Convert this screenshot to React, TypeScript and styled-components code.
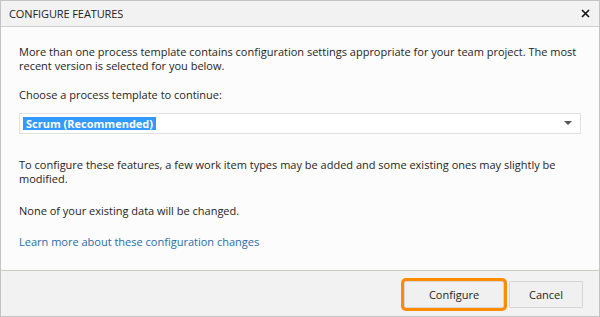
import styled, { createGlobalStyle } from "styled-components";

const GlobalStyle = createGlobalStyle`
    html, body {
        margin: 0;
        padding: 0;
        background: #ffffff;
    }
    body {
        font-family: "Open Sans", "Noto Sans", sans-serif;
        font-size: 11px;
        color: #1e1e1e;
    }
`;

const Dialog = styled.div`
    width: 600px;
    height: 317px;
    box-sizing: border-box;
    border: 1px solid #c3c3c3;
    display: flex;
    flex-direction: column;
    background: #fcfcfc;
`;

const TitleBar = styled.div`
    height: 25px;
    flex-shrink: 0;
    display: flex;
    align-items: center;
    justify-content: space-between;
    padding: 0 7px 0 8px;
    background: #f2f2f2;
    border-bottom: 1px solid #cfcfcb;
`;

const Title = styled.span`
    font-size: 11px;
    letter-spacing: -0.1px;
    color: #222;
`;

const CloseButton = styled.button`
    width: 14px;
    height: 14px;
    padding: 0;
    border: none;
    background: none;
    display: flex;
    align-items: center;
    justify-content: center;
`;

const Body = styled.div`
    flex: 1;
    padding: 18px 18px 0 18px;
    display: flex;
    flex-direction: column;
`;

const Text = styled.p<{ $gap: number }>`
    margin: 0 0 ${(p) => p.$gap}px 0;
    line-height: 14px;
`;

const LinkRow = styled.div`
    line-height: 14px;
`;

const Link = styled.a`
    color: #1f6ea8;
    text-decoration: none;
`;

const Select = styled.div`
    height: 21px;
    box-sizing: border-box;
    border: 1px solid #e1e1e1;
    background: #ffffff;
    display: flex;
    align-items: center;
    justify-content: space-between;
    padding: 0 8px 0 3px;
    margin-bottom: 24px;
`;

const Selected = styled.span`
    background: #3399ff;
    color: #ffffff;
    font-weight: 700;
    line-height: 13px;
    width: 130px;
    padding-left: 3px;
`;

const Footer = styled.div`
    height: 46px;
    flex-shrink: 0;
    box-sizing: border-box;
    border-top: 1px solid #c8c8c3;
    background: #f2f2f2;
    display: flex;
    justify-content: flex-end;
    align-items: flex-start;
    gap: 5px;
    padding: 10px 16px 0 0;
`;

const Button = styled.button<{ $w: number; $focused?: boolean }>`
    width: ${(p) => p.$w}px;
    height: 27px;
    box-sizing: border-box;
    border: 1px solid #d6d6d6;
    background: #f0f0f0;
    font-family: "Open Sans", "Noto Sans", sans-serif;
    font-size: 11px;
    color: #1e1e1e;
    border-radius: ${(p) => (p.$focused ? "2px" : "1px")};
    box-shadow: ${(p) => (p.$focused ? "0 0 0 3px #ff8c00" : "none")};
`;

export default function App() {
    return (
        <>
            <GlobalStyle />
            <Dialog>
                <TitleBar>
                    <Title>CONFIGURE FEATURES</Title>
                    <CloseButton aria-label="Close">
                        <svg width="9" height="9" viewBox="0 0 9 9">
                            <path d="M1 1 L8 8 M8 1 L1 8" stroke="#111" strokeWidth="1.6" />
                        </svg>
                    </CloseButton>
                </TitleBar>
                <Body>
                    <Text $gap={15}>
                        More than one process template contains configuration settings appropriate for your team project. The most
                        <br />
                        recent version is selected for you below.
                    </Text>
                    <Text $gap={11}>Choose a process template to continue:</Text>
                    <Select>
                        <Selected>Scrum (Recommended)</Selected>
                        <svg width="8" height="5" viewBox="0 0 8 5">
                            <path d="M0 0 H8 L4 4 Z" fill="#555" />
                        </svg>
                    </Select>
                    <Text $gap={18}>
                        To configure these features, a few work item types may be added and some existing ones may slightly be
                        <br />
                        modified.
                    </Text>
                    <Text $gap={17}>None of your existing data will be changed.</Text>
                    <LinkRow>
                        <Link href="#">Learn more about these configuration changes</Link>
                    </LinkRow>
                </Body>
                <Footer>
                    <Button $w={100} $focused>Configure</Button>
                    <Button $w={74}>Cancel</Button>
                </Footer>
            </Dialog>
        </>
    );
}
